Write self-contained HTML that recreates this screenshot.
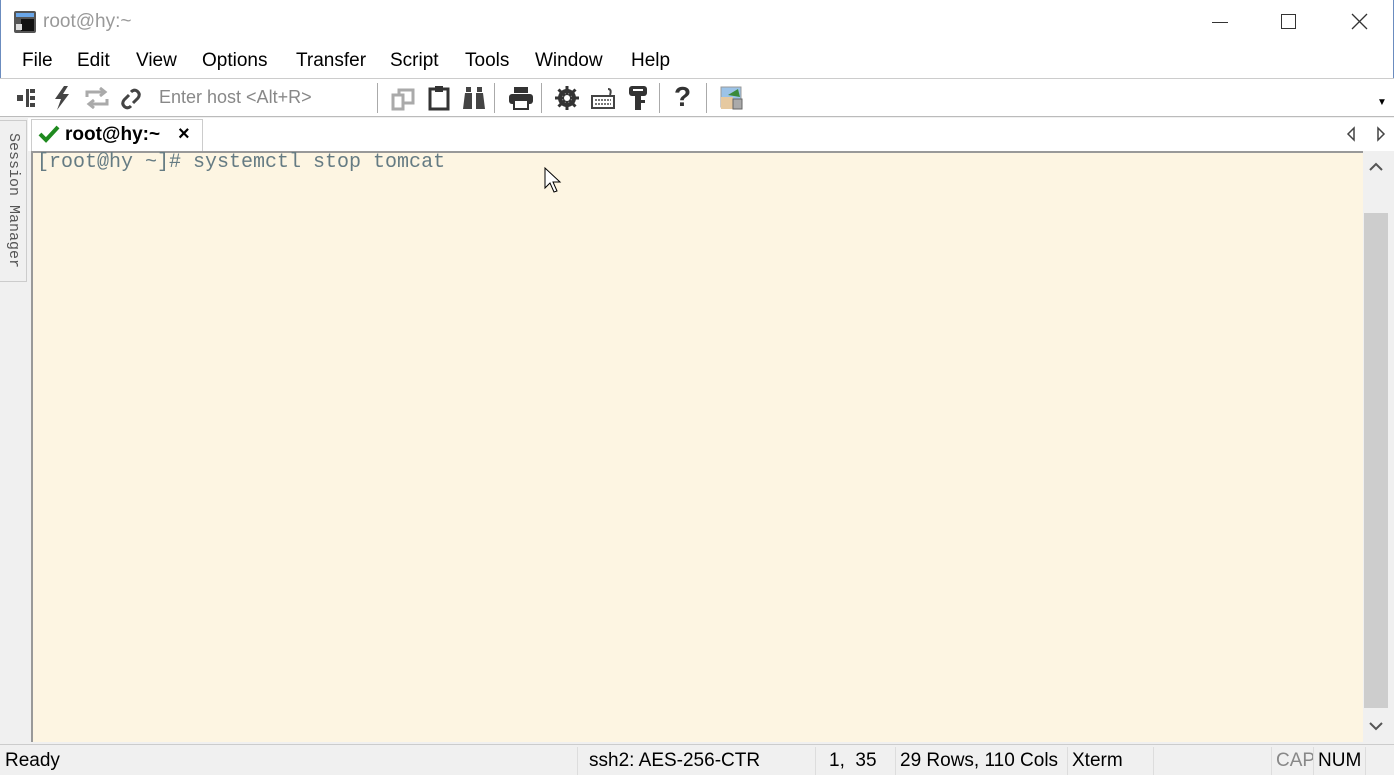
<!DOCTYPE html>
<html><head><style>
*{margin:0;padding:0;box-sizing:border-box}
body{width:1394px;height:775px;overflow:hidden;background:#f0f0f0;font-family:"Liberation Sans",sans-serif;position:relative}
.a{position:absolute}
#title{left:0;top:0;width:1394px;height:44px;background:#fff;border-left:1px solid #6b8cbf;border-right:1px solid #6b8cbf}
#menu{left:0;top:44px;width:1394px;height:34px;background:#fff;font-size:19px;color:#000;border-left:1px solid #6b8cbf;border-right:1px solid #6b8cbf}
#menu span{position:absolute;top:6px}
#tool{left:0;top:78px;width:1394px;height:39px;background:#fff;border-top:1px solid #ccc;border-bottom:1px solid #bbb}
.sep{position:absolute;top:4px;width:1px;height:30px;background:#aaa}
#tabs{left:28px;top:118px;width:1366px;height:33px;background:#fff}
#term{left:31px;top:151px;width:1332px;height:591px;background:#fdf5e2;border-top:2px solid #999;border-left:2px solid #999}
#sb{left:1363px;top:151px;width:26px;height:591px;background:#f0f0f0}
#status{left:0;top:744px;width:1394px;height:31px;background:#f0f0f0;border-top:1px solid #ccc;font-size:19px}
#status span{position:absolute;top:5px}
.vs{position:absolute;top:2px;width:1px;height:28px;background:#ddd}
</style></head><body>
<div class="a" id="title">
<svg class="a" style="left:12px;top:10px" width="24" height="24"><rect x="1" y="1" width="22" height="22" fill="#555" rx="2"/><rect x="3" y="3" width="18" height="4" fill="#6aa6e8"/><rect x="8" y="9" width="13" height="12" fill="#111"/><rect x="3" y="14" width="6" height="6" fill="#ddd"/></svg>
<span class="a" style="left:42px;top:11px;font-size:19px;color:#999">root@hy:~</span>
<div class="a" style="left:1211px;top:22px;width:16px;height:1px;background:#333"></div>
<div class="a" style="left:1280px;top:14px;width:15px;height:15px;border:1px solid #333"></div>
<svg class="a" style="left:1350px;top:13px" width="17" height="17"><path d="M1 1L16 16M16 1L1 16" stroke="#333" stroke-width="1.3"/></svg>
</div>
<div class="a" id="menu">
<span style="left:21px">File</span><span style="left:76px">Edit</span><span style="left:135px">View</span><span style="left:201px">Options</span><span style="left:295px">Transfer</span><span style="left:389px">Script</span><span style="left:464px">Tools</span><span style="left:534px">Window</span><span style="left:630px">Help</span>
</div>
<div class="a" id="tool">
<svg class="a" style="left:16px;top:8px" width="22" height="22"><rect x="1" y="8" width="6" height="6" fill="#444"/><rect x="10" y="2" width="3" height="18" fill="#444"/><rect x="14" y="2" width="5" height="4" fill="#444"/><rect x="14" y="9" width="5" height="4" fill="#444"/><rect x="14" y="16" width="5" height="4" fill="#444"/></svg>
<svg class="a" style="left:52px;top:6px" width="20" height="26"><path d="M12 1 L3 14 L9 14 L5 25 L17 9 L11 9 L16 1Z" fill="#444"/></svg>
<svg class="a" style="left:84px;top:8px" width="26" height="22"><path d="M3 10 V5 H20 M16 1 L21 5 L16 9 M23 12 V17 H6 M10 13 L5 17 L10 21" stroke="#aaa" stroke-width="3" fill="none"/></svg>
<svg class="a" style="left:119px;top:8px" width="24" height="24"><path d="M10 8 L5 13 Q2 17 6 20 Q9 22 12 19 M14 16 L19 11 Q22 7 18 4 Q15 2 12 5" stroke="#444" stroke-width="3" fill="none"/></svg>
<span class="a" style="left:159px;top:8px;font-size:18px;color:#888">Enter host &lt;Alt+R&gt;</span>
<div class="sep" style="left:377px"></div>
<svg class="a" style="left:391px;top:8px" width="26" height="24"><path d="M2 8 H12 V22 H2Z M8 8 V3 H22 V16 H12" stroke="#aaa" stroke-width="3" fill="none"/></svg>
<svg class="a" style="left:427px;top:6px" width="24" height="26"><path d="M3 4 H21 V24 H3Z" stroke="#333" stroke-width="3" fill="none"/><rect x="8" y="1" width="8" height="6" fill="#333"/></svg>
<svg class="a" style="left:461px;top:6px" width="26" height="26"><path d="M2 24 L4 8 H11 V24Z M15 24 V8 H22 L24 24Z" fill="#444"/><rect x="5" y="2" width="5" height="5" fill="#444"/><rect x="16" y="2" width="5" height="5" fill="#444"/></svg>
<div class="sep" style="left:494px"></div>
<svg class="a" style="left:507px;top:6px" width="28" height="26"><rect x="7" y="2" width="14" height="6" fill="#333"/><rect x="2" y="9" width="24" height="10" rx="3" fill="#333"/><rect x="7" y="15" width="14" height="9" fill="#fff" stroke="#333" stroke-width="2"/></svg>
<div class="sep" style="left:541px"></div>
<svg class="a" style="left:554px;top:6px" width="26" height="26"><circle cx="13" cy="13" r="7" fill="none" stroke="#333" stroke-width="4"/><path d="M13 1V25M1 13H25M4.5 4.5L21.5 21.5M21.5 4.5L4.5 21.5" stroke="#333" stroke-width="3"/><circle cx="13" cy="13" r="3" fill="#fff"/></svg>
<svg class="a" style="left:590px;top:8px" width="26" height="24"><path d="M18 2 Q22 2 20 8" stroke="#444" stroke-width="2" fill="none"/><rect x="2" y="9" width="22" height="12" fill="none" stroke="#444" stroke-width="2"/><path d="M5 13H21M5 17H21" stroke="#777" stroke-width="2" stroke-dasharray="2 1"/></svg>
<svg class="a" style="left:627px;top:6px" width="22" height="26"><rect x="2" y="1" width="18" height="10" rx="3" fill="#333"/><rect x="8" y="10" width="6" height="15" fill="#333"/><rect x="14" y="15" width="4" height="3" fill="#333"/><rect x="6" y="4" width="10" height="2" fill="#fff"/></svg>
<div class="sep" style="left:659px"></div>
<span class="a" style="left:674px;top:2px;font-size:28px;font-weight:bold;color:#333">?</span>
<div class="sep" style="left:706px"></div>
<svg class="a" style="left:720px;top:6px" width="24" height="26"><rect x="1" y="2" width="20" height="20" fill="#9cc3e8" stroke="#999"/><path d="M8 10 L18 4 L20 12Z" fill="#3a8a3a"/><rect x="1" y="12" width="12" height="12" fill="#e6c9a0"/><rect x="13" y="14" width="9" height="10" fill="#aaa" stroke="#666"/></svg>
<span class="a" style="left:1377px;top:18px;font-size:10px;color:#000">▼</span>
</div>
<div class="a" style="left:0;top:120px;width:27px;height:162px;background:#f0f0f0;border:1px solid #ccc;border-left:none"></div>
<div class="a" style="left:2px;top:133px;width:20px;height:140px;writing-mode:vertical-rl;font-family:'Liberation Mono',monospace;font-size:15px;color:#555">Session Manager</div>
<div class="a" id="tabs">
<div class="a" style="left:3px;top:1px;width:172px;height:32px;background:#fff;border:1px solid #ccc;border-bottom:none"></div>
<svg class="a" style="left:10px;top:7px" width="22" height="18"><path d="M2 9 L8 15 L20 2" stroke="#1f8a1f" stroke-width="4" fill="none"/></svg>
<span class="a" style="left:37px;top:6px;font-size:19px;font-weight:bold">root@hy:~</span>
<span class="a" style="left:150px;top:5px;font-size:20px;font-weight:bold">×</span>
<svg class="a" style="left:1318px;top:8px" width="40" height="16"><path d="M8 2 L2 8 L8 14Z M32 2 L38 8 L32 14Z" fill="none" stroke="#444" stroke-width="1.5"/></svg>
</div>
<div class="a" id="term"><span class="a" style="left:4px;top:-2px;font-family:'Liberation Mono',monospace;font-size:20px;color:#657b83;white-space:pre">[root@hy ~]# systemctl stop tomcat</span></div>
<div class="a" id="sb">
<svg class="a" style="left:6px;top:11px" width="14" height="10"><path d="M1 8 L7 2 L13 8" stroke="#555" stroke-width="2" fill="none"/></svg>
<div class="a" style="left:1px;top:62px;width:24px;height:495px;background:#cdcdcd"></div>
<svg class="a" style="left:6px;top:570px" width="14" height="10"><path d="M1 2 L7 8 L13 2" stroke="#555" stroke-width="2" fill="none"/></svg>
</div>
<svg class="a" style="left:543px;top:166px" width="20" height="28"><path d="M2 2 V22 L7 17 L11 26 L14 25 L10 16 L17 16Z" fill="#fff" stroke="#000" stroke-width="1"/></svg>
<div class="a" id="status">
<span style="left:5px">Ready</span>
<div class="vs" style="left:577px"></div><span style="left:589px">ssh2: AES-256-CTR</span>
<div class="vs" style="left:815px"></div><span style="left:829px">1,&nbsp; 35</span>
<div class="vs" style="left:895px"></div><span style="left:900px">29 Rows, 110 Cols</span>
<div class="vs" style="left:1067px"></div><span style="left:1072px">Xterm</span>
<div class="vs" style="left:1153px"></div>
<div class="vs" style="left:1271px"></div><span style="left:1276px;color:#888">CAP</span>
<div class="vs" style="left:1313px"></div><span style="left:1318px">NUM</span>
<div class="vs" style="left:1365px"></div>
</div>
</body></html>
